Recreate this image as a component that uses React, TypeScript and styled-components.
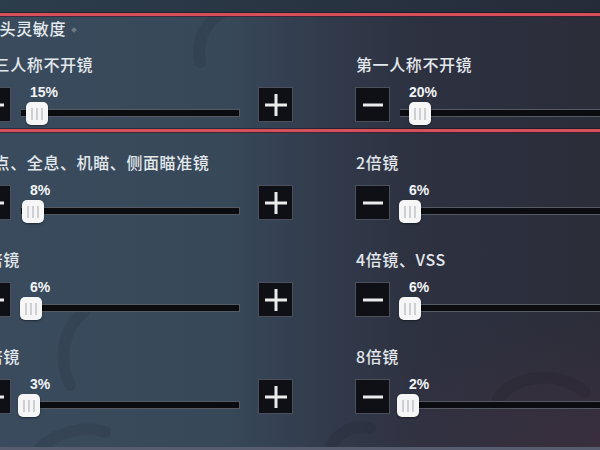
import styled, { createGlobalStyle } from "styled-components";

const GlobalStyle = createGlobalStyle`
  html, body {
    margin: 0;
    padding: 0;
    background: #2b2e3a;
  }
`;

const Screen = styled.div`
  position: relative;
  width: 600px;
  height: 450px;
  overflow: hidden;
  display: flex;
  flex-direction: column;
  font-family: "Noto Sans CJK SC", "Noto Sans", sans-serif;
  color: #e3e8ec;
  background:
    radial-gradient(ellipse 260px 140px at 600px 450px, rgba(90, 50, 70, 0.3), transparent),
    linear-gradient(90deg, #3a4b5d 0%, #374859 38%, #313a4b 55%, #2d3140 70%, #2b2d39 100%);
`;

const Backdrop = styled.svg`
  position: absolute;
  inset: 0;
  pointer-events: none;
`;

const Layer = styled.div`
  position: relative;
  display: flex;
  flex-direction: column;
  flex: 1;
`;

const TopBand = styled.div`
  height: 13px;
  background: linear-gradient(90deg, #2c3d4c, #252b39);
`;

const Rule = styled.div<{ $gap?: number }>`
  height: 3px;
  margin-top: ${(p) => p.$gap ?? 0}px;
  background: #d6505b;
  box-shadow: 0 -1px 0 rgba(20, 10, 20, 0.45), 0 1px 0 rgba(70, 25, 45, 0.7);
`;

const Header = styled.div`
  display: flex;
  align-items: center;
  gap: 6px;
  margin-left: -17px;
  padding-top: 2px;
  font-size: 16px;
  font-weight: 500;
  line-height: 21px;
  letter-spacing: 0.6px;
  color: #e6ebef;
`;

const Diamond = styled.span`
  width: 4px;
  height: 4px;
  margin-top: 2px;
  background: #6f7a86;
  transform: rotate(45deg);
`;

const Band = styled.div<{ $top: number }>`
  display: grid;
  grid-template-columns: 317px 317px;
  column-gap: 62px;
  row-gap: 25px;
  margin-left: -24px;
  padding-top: ${(p) => p.$top}px;
`;

const Setting = styled.div`
  display: flex;
  flex-direction: column;
`;

const Label = styled.div`
  padding-left: 1px;
  font-size: 16px;
  font-weight: 500;
  line-height: 22px;
  letter-spacing: 0.6px;
  white-space: nowrap;
`;

const Controls = styled.div`
  display: flex;
  align-items: flex-start;
  margin-top: 9px;
  height: 41px;
`;

const StepButton = styled.button`
  flex: none;
  width: 35px;
  height: 35px;
  margin-top: 3px;
  padding: 0;
  display: flex;
  align-items: center;
  justify-content: center;
  background: #0e1016;
  border: 1px solid #4c505a;
  border-radius: 0;
`;

const SliderArea = styled.div`
  flex: none;
  width: 223px;
  margin: 0 18px 0 6px;
  display: flex;
  flex-direction: column;
`;

const ValueText = styled.div`
  height: 16px;
  padding-left: 13px;
  font-family: "Liberation Sans", Arial, sans-serif;
  font-weight: 700;
  font-size: 14px;
  line-height: 16px;
  color: #f2f4f6;
`;

const TrackArea = styled.div`
  position: relative;
  height: 23px;
  margin-top: 2px;
`;

const TrackBar = styled.div`
  position: absolute;
  left: 4px;
  right: 0;
  top: 7px;
  height: 8px;
  box-sizing: border-box;
  background: #0b0c10;
  border: 1px solid #565a63;
  border-left: none;
`;

const Thumb = styled.div`
  position: absolute;
  top: 0;
  width: 22px;
  height: 23px;
  border-radius: 5px;
  background: #f6f6f6;
  box-shadow: 0 1px 2px rgba(0, 0, 0, 0.45);
  display: flex;
  align-items: center;
  justify-content: center;
  gap: 3px;
`;

const Grip = styled.span`
  width: 2px;
  height: 12px;
  background: #cdcfd2;
`;

const Spacer = styled.div`
  flex: 1;
`;

const BottomEdge = styled.div`
  height: 3px;
  background: #565d6e;
`;

const TRACK = 223;
const THUMB = 22;

function Minus() {
  return (
    <svg width="22" height="22" viewBox="0 0 22 22">
      <path d="M1 11h20" stroke="#ebebeb" strokeWidth="3" />
    </svg>
  );
}

function Plus() {
  return (
    <svg width="24" height="24" viewBox="0 0 24 24">
      <path d="M1 12h22M12 1v22" stroke="#ebebeb" strokeWidth="3" />
    </svg>
  );
}

interface SliderProps {
  label: string;
  value: number;
}

function SensitivitySlider({ label, value }: SliderProps) {
  // range of the game setting is 1%..300%
  const left = ((value - 1) / 299) * (TRACK - THUMB);
  return (
    <Setting>
      <Label>{label}</Label>
      <Controls>
        <StepButton>
          <Minus />
        </StepButton>
        <SliderArea>
          <ValueText>{value}%</ValueText>
          <TrackArea>
            <TrackBar />
            <Thumb style={{ left }}>
              <Grip />
              <Grip />
              <Grip />
            </Thumb>
          </TrackArea>
        </SliderArea>
        <StepButton>
          <Plus />
        </StepButton>
      </Controls>
    </Setting>
  );
}

const noScope: SliderProps[] = [
  { label: "第三人称不开镜", value: 15 },
  { label: "第一人称不开镜", value: 20 },
];

const scopes: SliderProps[] = [
  { label: "红点、全息、机瞄、侧面瞄准镜", value: 8 },
  { label: "2倍镜", value: 6 },
  { label: "3倍镜", value: 6 },
  { label: "4倍镜、VSS", value: 6 },
  { label: "6倍镜", value: 3 },
  { label: "8倍镜", value: 2 },
];

export default function App() {
  return (
    <>
      <GlobalStyle />
      <Screen>
        <Backdrop width="600" height="450" viewBox="0 0 600 450">
          <g fill="none" stroke="rgba(0,0,0,0.07)" strokeWidth="12" strokeLinecap="round">
            <path d="M230 8 C205 20 196 40 200 62" />
            <path d="M85 310 C62 330 58 360 70 385" />
            <path d="M498 398 C520 372 560 372 585 392" />
            <path d="M330 448 C338 432 352 425 370 428" />
            <path d="M40 448 C60 430 85 426 105 432" />
          </g>
        </Backdrop>
        <Layer>
          <TopBand />
          <Rule />
          <Header>
            镜头灵敏度
            <Diamond />
          </Header>
          <Band $top={14}>
            {noScope.map((s) => (
              <SensitivitySlider key={s.label} {...s} />
            ))}
          </Band>
          <Rule $gap={4} />
          <Band $top={19}>
            {scopes.map((s) => (
              <SensitivitySlider key={s.label} {...s} />
            ))}
          </Band>
          <Spacer />
          <BottomEdge />
        </Layer>
      </Screen>
    </>
  );
}
